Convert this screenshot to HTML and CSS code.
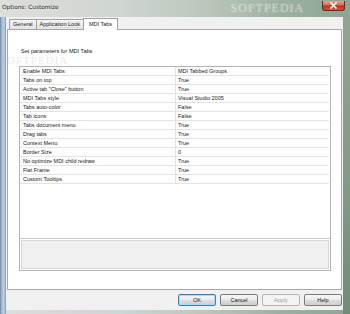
FILE: index.html
```html
<!DOCTYPE html>
<html>
<head>
  <meta charset="UTF-8">
  <title>Options: Customize</title>
  <link rel="stylesheet" href="styles.css">
</head>
<body>
  <div class="window">
    <div class="titlebar">
      <span class="title">Options: Customize</span>
      <span class="watermark">SOFTPEDIA</span>
      <span class="close">
        <svg width="9" height="7" viewBox="0 0 9 7"><path d="M1.5 0.5 L7.5 6.5 M7.5 0.5 L1.5 6.5" stroke="#fff" stroke-width="1.6"/></svg>
      </span>
    </div>
    <div class="frame">
      <div class="client">
        <div class="tabs">
          <div class="tab">General</div>
          <div class="tab">Application Look</div>
          <div class="tab active">MDI Tabs</div>
        </div>
        <div class="page">
          <p class="caption">Set parameters for MDI Tabs</p>
          <div class="grid">
            <div class="grid-body">
              <table class="props">
                <tr><td>Enable MDI Tabs</td><td>MDI Tabbed Groups</td></tr>
                <tr><td>Tabs on top</td><td>True</td></tr>
                <tr><td>Active tab "Close" button</td><td>True</td></tr>
                <tr><td>MDI Tabs style</td><td>Visual Studio 2005</td></tr>
                <tr><td>Tabs auto-color</td><td>False</td></tr>
                <tr><td>Tab icons</td><td>False</td></tr>
                <tr><td>Tabs document menu</td><td>True</td></tr>
                <tr><td>Drag tabs</td><td>True</td></tr>
                <tr><td>Context Menu</td><td>True</td></tr>
                <tr><td>Border Size</td><td>0</td></tr>
                <tr><td>No optimize MDI child redraw</td><td>True</td></tr>
                <tr><td>Flat Frame</td><td>True</td></tr>
                <tr><td>Custom Tooltips</td><td>True</td></tr>
              </table>
            </div>
            <div class="desc"></div>
          </div>
        </div>
        <div class="buttons">
          <button class="btn default">OK</button>
          <button class="btn">Cancel</button>
          <button class="btn disabled">Apply</button>
          <button class="btn">Help</button>
        </div>
      </div>
      <div class="rightframe"></div>
    </div>
    <div class="stamp">SOFTPEDIA</div>
  </div>
</body>
</html>
```
FILE: styles.css
```css
body {
  margin: 0;
  font-family: "Liberation Sans", Arial, sans-serif;
  background-color: #8fa394;
}
.window {
  width: 350px;
  height: 314px;
  overflow: hidden;
  position: relative;
  background: linear-gradient(90deg, #dcdedb 0%, #cfd5cf 35%, #b9c6bb 60%, #9db0a0 80%, #8ea592 100%);
}
.titlebar {
  height: 17px;
  display: flex;
  align-items: flex-start;
  position: relative;
}
.title {
  font-family: "DejaVu Sans", sans-serif;
  font-size: 5.8px;
  color: #1e1e1e;
  margin: 4px 0 0 2px;
  text-shadow: 0 0 3px #fff;
}
.watermark {
  font-family: "Liberation Serif", serif;
  font-size: 12px;
  letter-spacing: 1px;
  color: rgba(255, 255, 255, 0.3);
  text-shadow: 0 0 2px rgba(255, 255, 255, 0.4);
  margin: 1px 0 0 172px;
}
.close {
  position: absolute;
  left: 322px;
  top: 1px;
  width: 23px;
  height: 10px;
  border: 1px solid #6d2a22;
  border-top: none;
  border-radius: 0 0 3px 3px;
  box-sizing: border-box;
  background: linear-gradient(#e8a496 0%, #d46a55 45%, #b8331c 55%, #d8503a 100%);
  display: flex;
  align-items: center;
  justify-content: center;
}
.frame {
  display: flex;
  height: 297px;
  padding-left: 6px;
  background: linear-gradient(90deg, #6f89a8 0px, #a9bdd4 2px, #c4d2e0 4px, #7f95ad 6px);
  background-size: 6px 100%;
  background-repeat: no-repeat;
}
.client {
  width: 337px;
  height: 293px;
  background-color: #f0f0f0;
  padding: 1px 1px 0 1px;
  box-sizing: border-box;
  display: flex;
  flex-direction: column;
}
.rightframe {
  flex: 1;
  background: linear-gradient(#8ea592, #7f9a85 60%, #6e8c77);
}
.tabs {
  height: 11px;
  display: flex;
  align-items: flex-end;
  padding-left: 2px;
  position: relative;
  z-index: 1;
}
.tab {
  height: 9px;
  border: 1px solid #a3a3a3;
  border-bottom: none;
  padding: 0 3px;
  font-size: 5.5px;
  line-height: 9px;
  color: #1a1a1a;
  background: linear-gradient(#f4f4f4, #e2e2e2);
  margin-right: -1px;
}
.tab.active {
  height: 11px;
  margin-bottom: -1px;
  padding: 0 5px;
  background: #fff;
  line-height: 10px;
}
.page {
  height: 261px;
  background-color: #fff;
  border: 1px solid #a8a8a8;
  box-sizing: border-box;
  padding: 18px 10px 0 11px;
}
.caption {
  margin: 0 0 11px 2px;
  font-size: 5.6px;
  color: #1a1a1a;
  line-height: 7px;
}
.grid {
  width: 312px;
  height: 205px;
  border: 1px solid #b4b4b4;
  box-sizing: border-box;
  display: flex;
  flex-direction: column;
}
.grid-body {
  height: 173px;
  border-bottom: 1px solid #c8c8c8;
}
.props {
  width: 309px;
  border-collapse: collapse;
  table-layout: fixed;
}
.props td {
  height: 8px;
  padding: 0 0 0 3px;
  font-size: 5.5px;
  line-height: 8px;
  color: #1a1a1a;
  border-bottom: 1px solid #e4e4e4;
  white-space: nowrap;
  overflow: hidden;
}
.props td:first-child {
  width: 152px;
  border-right: 1px solid #e4e4e4;
}
.props td:last-child {
  padding-left: 2px;
}
.desc {
  margin: 1px;
  height: 27px;
  background-color: #f0f0f0;
  border: 1px solid #d6d6d6;
}
.buttons {
  display: flex;
  justify-content: flex-end;
  gap: 4px;
  margin-top: 4px;
}
.btn {
  width: 38px;
  height: 12px;
  padding: 0;
  font-family: "Liberation Sans", Arial, sans-serif;
  font-size: 5.5px;
  color: #1a1a1a;
  border: 1px solid #7a7a7a;
  border-radius: 2px;
  background: linear-gradient(#f6f6f6 0%, #ebebeb 50%, #dddddd 51%, #cfcfcf 100%);
}
.btn.default {
  border-color: #3c7fb1;
  box-shadow: inset 0 0 0 1px #a6dcf7;
}
.btn.disabled {
  color: #a0a0a0;
  border-color: #b5b5b5;
  background: #f4f4f4;
}
.stamp {
  position: absolute;
  left: 0;
  top: 55px;
  font-family: "Liberation Serif", serif;
  font-size: 11px;
  letter-spacing: 1px;
  color: rgba(190, 190, 190, 0.35);
  line-height: 10px;
}
```
